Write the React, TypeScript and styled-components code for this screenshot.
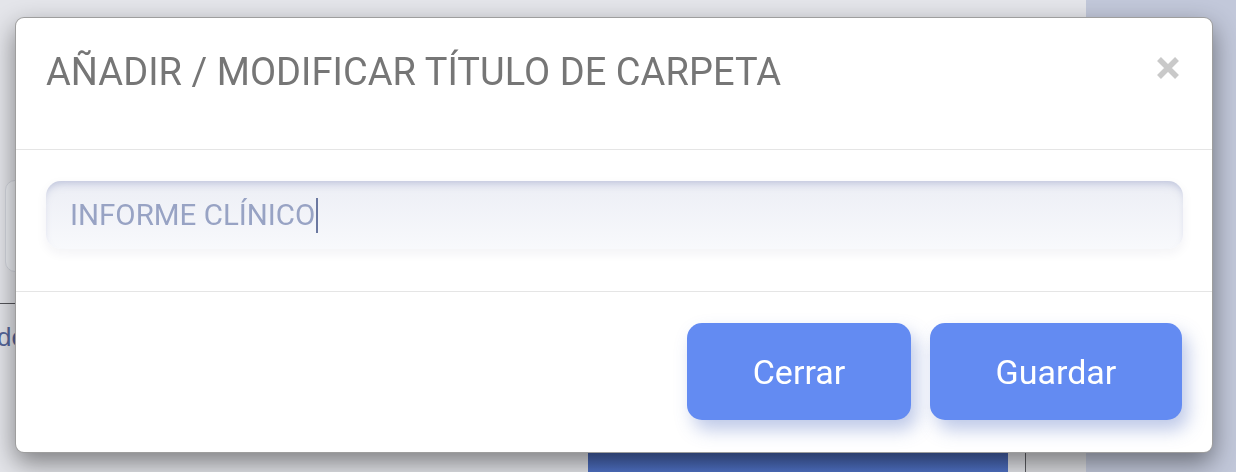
import React from "react";
import styled, { createGlobalStyle } from "styled-components";

const Global = createGlobalStyle`
  html, body {
    margin: 0;
    padding: 0;
    width: 1236px;
    height: 472px;
    overflow: hidden;
    font-family: "Roboto", "Liberation Sans", sans-serif;
  }
  * { box-sizing: border-box; }
`;

const Page = styled.div`
  display: flex;
  width: 1236px;
  height: 472px;
  background: #e4e5ea;
`;

const Main = styled.div`
  width: 1025px;
  display: flex;
  flex-direction: column;
`;

const TopSpace = styled.div`
  height: 180px;
`;

const SearchBox = styled.div`
  margin-left: 5px;
  width: 600px;
  height: 92px;
  border-radius: 10px;
  background: #eceef3;
  border: 1px solid #d3d6de;
`;

const Rule = styled.div`
  margin-top: 31px;
  border-top: 1px solid #55565b;
`;

const RowText = styled.div`
  margin-top: 18px;
  margin-left: -3px;
  font-size: 26px;
  color: #56669a;
  font-family: "Liberation Sans", sans-serif;
`;

const Grow = styled.div`
  flex: 1;
`;

const BackButton = styled.div`
  margin-left: 588px;
  width: 420px;
  height: 40px;
  border-radius: 10px 10px 0 0;
  background: linear-gradient(180deg, #3b5190 0%, #4f72c6 100%);
`;

const Gutter = styled.div`
  width: 61px;
  display: flex;
  flex-direction: column;
  background: #dcdde1;
`;

const GutterTop = styled.div`
  height: 120px;
  background: #e4e5ea;
`;

const GutterBody = styled.div`
  flex: 1;
  border-left: 1px solid #5c5d62;
`;

const Sidebar = styled.div`
  flex: 1;
  background: #c2c8da;
`;

const Modal = styled.div`
  position: fixed;
  left: 15px;
  top: 17px;
  width: 1198px;
  height: 436px;
  background: #fff;
  border: 1px solid rgba(0, 0, 0, 0.38);
  border-radius: 9px;
  box-shadow: 0 10px 26px rgba(0, 0, 0, 0.45);
  display: flex;
  flex-direction: column;
`;

const Header = styled.div`
  height: 132px;
  display: flex;
  align-items: flex-start;
  justify-content: space-between;
  padding: 32px 33px 0 30px;
  border-bottom: 1px solid #e5e5e5;
`;

const Title = styled.h4`
  margin: 0;
  font-size: 38px;
  font-weight: 400;
  line-height: 44px;
  color: #767676;
  letter-spacing: 0.05px;
`;

const Close = styled.button`
  margin-top: 7px;
  border: 0;
  padding: 0;
  background: transparent;
  width: 22px;
  height: 22px;
  display: flex;
  cursor: pointer;
`;

const Body = styled.div`
  height: 142px;
  padding: 31px 29px 0 30px;
  border-bottom: 1px solid #e5e5e5;
`;

const Field = styled.div`
  height: 68px;
  border-radius: 15px;
  display: flex;
  align-items: center;
  padding-left: 24px;
  background: linear-gradient(180deg, #eceef5 0%, #f8f9fc 100%);
  box-shadow: inset 0 6px 9px -4px rgba(135, 145, 190, 0.5),
    0 4px 12px rgba(30, 40, 80, 0.06);
`;

const FieldText = styled.span`
  font-size: 29.5px;
  color: #98a3c4;
  font-weight: 400;
`;

const Caret = styled.span`
  display: inline-block;
  width: 2px;
  height: 35px;
  margin-left: 1px;
  background: #6b78a0;
`;

const Footer = styled.div`
  flex: 1;
  display: flex;
  justify-content: flex-end;
  align-items: flex-start;
  gap: 19px;
  padding: 31px 30px 0 0;
`;

const Button = styled.button<{ $w: number }>`
  width: ${(p) => p.$w}px;
  height: 97px;
  border: 0;
  border-radius: 15px;
  background: #638bf2;
  color: #fff;
  font-family: "Roboto", "Liberation Sans", sans-serif;
  font-size: 34px;
  font-weight: 400;
  box-shadow: 6px 10px 18px rgba(70, 100, 190, 0.35);
  cursor: pointer;
`;

export default function App() {
  return (
    <>
      <Global />
      <Page>
        <Main>
          <TopSpace />
          <SearchBox />
          <Rule />
          <RowText>de</RowText>
          <Grow />
          <BackButton />
        </Main>
        <Gutter>
          <GutterTop />
          <GutterBody />
        </Gutter>
        <Sidebar />
      </Page>
      <Modal>
        <Header>
          <Title>AÑADIR / MODIFICAR TÍTULO DE CARPETA</Title>
          <Close aria-label="Cerrar">
            <svg width="22" height="22" viewBox="0 0 22 22">
              <path d="M2 2 L20 20 M20 2 L2 20" stroke="#c9c9c9" strokeWidth="5.5" strokeLinecap="butt" />
            </svg>
          </Close>
        </Header>
        <Body>
          <Field>
            <FieldText>INFORME CLÍNICO</FieldText>
            <Caret />
          </Field>
        </Body>
        <Footer>
          <Button $w={224}>Cerrar</Button>
          <Button $w={252}>Guardar</Button>
        </Footer>
      </Modal>
    </>
  );
}
